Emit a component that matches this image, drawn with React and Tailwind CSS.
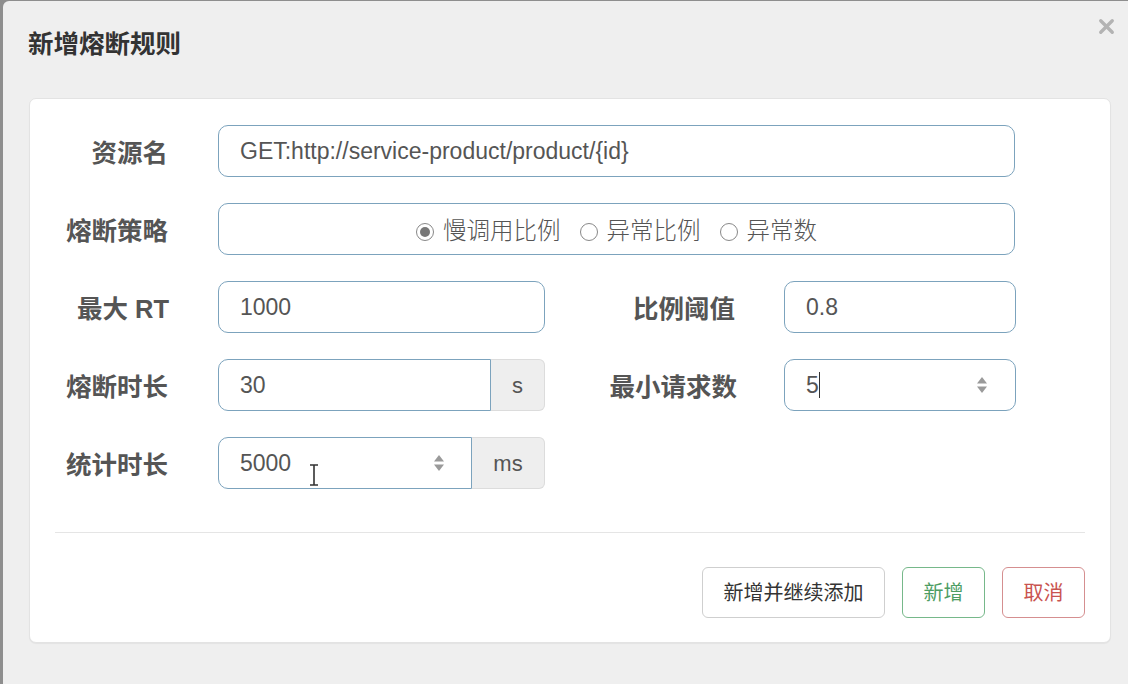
import { X } from 'lucide-react'

const cjk = { fontFamily: '"Liberation Sans", "Noto Sans CJK SC", sans-serif' }

function Label({ children, className = '' }) {
  return (
    <div className={`text-[25.5px] font-bold text-[#555] text-right leading-none pt-[5px] ${className}`} style={cjk}>
      {children}
    </div>
  )
}

function Spinner() {
  return (
    <svg width="12" height="20" viewBox="0 0 12 20" className="shrink-0">
      <path d="M6 2 L11 8.5 L1 8.5 Z" fill="#9a9a9a" />
      <path d="M6 18 L11 11.5 L1 11.5 Z" fill="#9a9a9a" />
    </svg>
  )
}

function Radio({ checked, texto }) {
  return (
    <span className="flex items-center gap-[9px]">
      <span className="w-[18px] h-[18px] rounded-full border border-[#888] bg-white flex items-center justify-center">
        {checked && <span className="w-[10px] h-[10px] rounded-full bg-[#777]" />}
      </span>
      <span>{texto}</span>
    </span>
  )
}

const inputBox = 'h-[52px] border-[1.5px] border-[#7ca3bd] bg-white flex items-center pl-[21px] text-[23px] text-[#555]'

export default function App() {
  return (
    <div className="w-[1128px] h-[684px] bg-[#8e8e8e] pl-[3px] pt-[1px] overflow-hidden" style={cjk}>
      <div className="w-[1125px] h-[683px] bg-[#efefef] rounded-tl-[6px] flex flex-col">
        <div className="flex items-center justify-between h-[97px] pl-[25px] pr-[10px]">
          <h1 className="text-[25.5px] font-bold text-[#333] -mt-[10px]">新增熔断规则</h1>
          <X size={23} strokeWidth={3.5} className="text-[#b3b3b3] self-start mt-[14px]" />
        </div>

        <div className="ml-[26px] mr-[17px] h-[545px] bg-white rounded-[7px] border border-[#e3e3e3] shadow-[0_1px_1px_rgba(0,0,0,0.05)] pt-[26px]">
          <div className="flex flex-col gap-[26px]">
            <div className="flex items-center">
              <Label className="w-[138px]">资源名</Label>
              <div className={`${inputBox} ml-[50px] w-[797px] rounded-[10px]`} style={{ fontFamily: '"Liberation Sans", sans-serif' }}>
                GET:http://service-product/product/{'{id}'}
              </div>
            </div>

            <div className="flex items-center">
              <Label className="w-[138px]">熔断策略</Label>
              <div className="ml-[50px] w-[797px] h-[52px] rounded-[10px] border-[1.5px] border-[#7ca3bd] flex items-center justify-center gap-[19px] pt-[5px] text-[23.5px] text-[#555] font-light">
                <Radio checked texto="慢调用比例" />
                <Radio texto="异常比例" />
                <Radio texto="异常数" />
              </div>
            </div>

            <div className="flex items-center">
              <Label className="w-[139px]">最大 RT</Label>
              <div className={`${inputBox} ml-[49px] w-[327px] rounded-[10px]`}>1000</div>
              <Label className="w-[190px]">比例阈值</Label>
              <div className={`${inputBox} ml-[49px] w-[232px] rounded-[10px]`}>0.8</div>
            </div>

            <div className="flex items-center">
              <Label className="w-[138px]">熔断时长</Label>
              <div className="ml-[50px] w-[327px] flex h-[52px]">
                <div className={`${inputBox} flex-1 rounded-l-[10px]`}>30</div>
                <div className="w-[54px] bg-[#eeeeee] border border-l-0 border-[#dcdcdc] rounded-r-[6px] flex items-center justify-center text-[22px] text-[#555]">
                  s
                </div>
              </div>
              <Label className="w-[192px]">最小请求数</Label>
              <div className={`${inputBox} ml-[47px] w-[232px] rounded-[10px] pr-[27px] justify-between`}>
                <span className="flex items-center">
                  5<span className="w-[1.5px] h-[26px] bg-[#333]" />
                </span>
                <Spinner />
              </div>
            </div>

            <div className="flex items-center">
              <Label className="w-[138px]">统计时长</Label>
              <div className="ml-[50px] w-[327px] flex h-[52px]">
                <div className={`${inputBox} flex-1 rounded-l-[10px] pr-[26px] justify-between`}>
                  <span className="flex items-center">
                    5000
                    <svg width="12" height="22" viewBox="0 0 12 22" className="ml-[17px] mt-[24px]">
                      <path d="M2 1 H10 M6 1 V21 M2 21 H10" stroke="#333" strokeWidth="1.6" fill="none" />
                    </svg>
                  </span>
                  <Spinner />
                </div>
                <div className="w-[73px] bg-[#eeeeee] border border-l-0 border-[#dcdcdc] rounded-r-[6px] flex items-center justify-center text-[22px] text-[#555]">
                  ms
                </div>
              </div>
            </div>
          </div>

          <div className="mx-[25px] mt-[43px] border-t border-[#e5e5e5]" />

          <div className="flex justify-end gap-[17px] pr-[25px] mt-[34px] text-[20px]">
            <button className="w-[183px] h-[51px] rounded-[6px] border border-[#cfcfcf] bg-white text-[#333]">新增并继续添加</button>
            <button className="w-[83px] h-[51px] rounded-[6px] border-[1.5px] border-[#76b88a] bg-white text-[#4d9d63]">新增</button>
            <button className="w-[83px] h-[51px] rounded-[6px] border-[1.5px] border-[#d58f90] bg-white text-[#c9534f]">取消</button>
          </div>
        </div>
      </div>
    </div>
  )
}
